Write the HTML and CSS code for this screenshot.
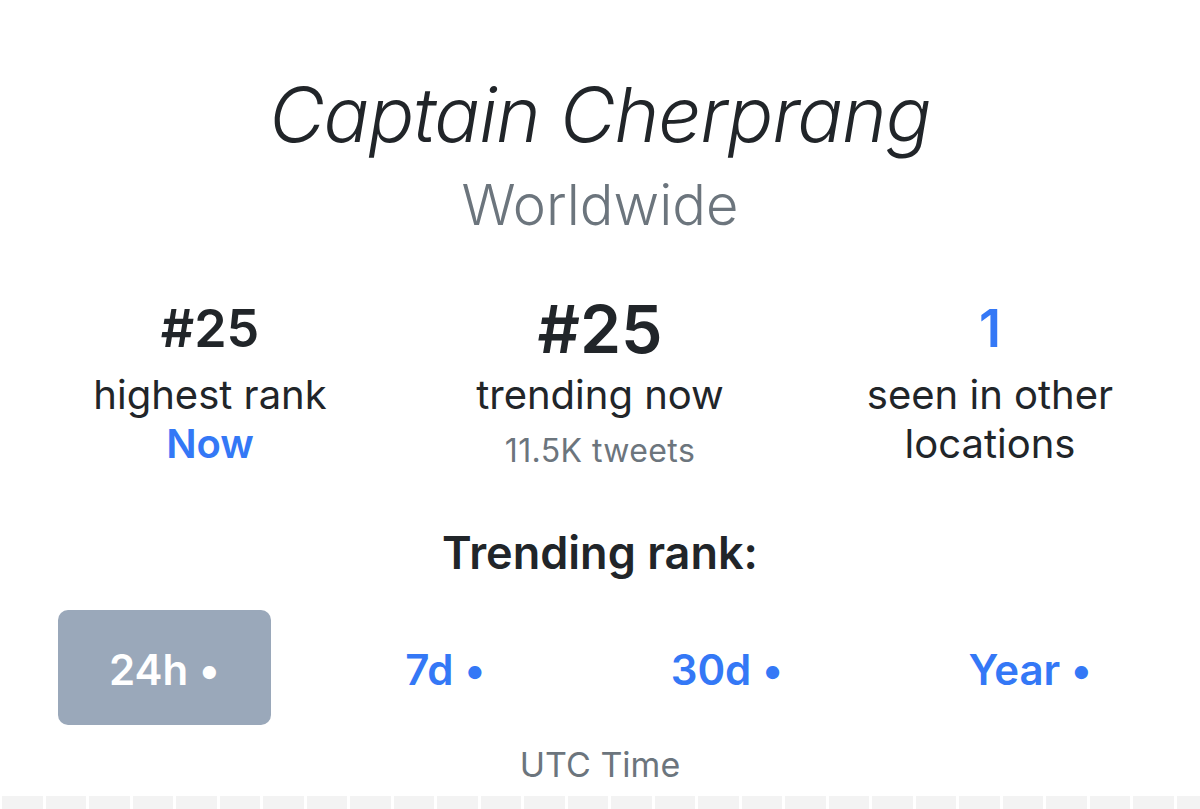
FILE: index.html
```html
<!DOCTYPE html>
<html lang="en">
<head>
  <meta charset="UTF-8" />
  <title>Captain Cherprang - Worldwide</title>
  <link rel="stylesheet" href="styles.css">
</head>
<body>

  <div class="trend-page">
    <h1 class="trend-name">Captain Cherprang</h1>
    <div class="trend-location">Worldwide</div>

    <div class="stats">
      <div class="stat">
        <div class="stat-num">#25</div>
        <div class="stat-label">highest rank</div>
        <div class="stat-label blue strong">Now</div>
      </div>
      <div class="stat">
        <div class="stat-num big">#25</div>
        <div class="stat-label">trending now</div>
        <div class="stat-sub">11.5K tweets</div>
      </div>
      <div class="stat">
        <div class="stat-num blue">1</div>
        <div class="stat-label">seen in other</div>
        <div class="stat-label">locations</div>
      </div>
    </div>

    <h2 class="rank-title">Trending rank:</h2>

    <div class="ranges">
      <div class="range active">24h •</div>
      <div class="range">7d •</div>
      <div class="range">30d •</div>
      <div class="range">Year •</div>
    </div>

    <div class="utc">UTC Time</div>

    <div class="hours" id="hours"></div>
  </div>

  <script>
    // hour cells of the chart
    const hours = document.getElementById('hours');
    for (let i = 0; i < 28; i++) {
      const cell = document.createElement('div');
      cell.className = 'hour';
      hours.appendChild(cell);
    }
  </script>

</body>
</html>
```

FILE: styles.css
```css
body {
  font-family: 'Inter', 'Roboto', sans-serif;
  background-color: #fff;
  color: #212529;
  margin: 0;
  padding: 0;
  overflow: hidden;
}

.trend-page {
  width: 1200px;
  height: 809px;
  text-align: center;
  padding-top: 75px;
  box-sizing: border-box;
}

.trend-name {
  margin: 0;
  font-size: 76px;
  line-height: 78px;
  font-weight: 300;
  font-style: italic;
  letter-spacing: -1px;
}

.trend-location {
  margin-top: 25px;
  font-size: 56px;
  line-height: 55px;
  font-weight: 300;
  color: #6c757d;
}

.stats {
  display: grid;
  grid-template-columns: repeat(3, 1fr);
  padding: 0 15px;
  margin-top: 61px;
}

.stat-num {
  font-size: 52px;
  line-height: 70px;
  font-weight: 600;
}

.stat-num.big {
  font-size: 66px;
}

.stat-label {
  font-size: 40px;
  line-height: 49px;
}

.stat-num + .stat-label {
  margin-top: 6px;
}

.stat-sub {
  font-size: 32px;
  line-height: 49px;
  margin-top: 7px;
  letter-spacing: 0.4px;
  color: #6c757d;
}

.blue {
  color: #3478f6;
}

.strong {
  font-weight: 600;
}

.rank-title {
  margin: 0;
  margin-top: 56px;
  font-size: 45px;
  line-height: 44px;
  font-weight: 600;
}

.ranges {
  display: flex;
  justify-content: space-between;
  padding: 0 57px 0 58px;
  margin-top: 35px;
}

.range {
  height: 115px;
  box-sizing: border-box;
  padding: 6px 51px 0;
  line-height: 107px;
  font-size: 42px;
  font-weight: 600;
  color: #3478f6;
  border-radius: 10px;
}

.range.active {
  background-color: #9aa8ba;
  color: #fff;
}

.utc {
  margin-top: 23px;
  font-size: 34px;
  line-height: 1;
  color: #6c757d;
}

.hours {
  display: flex;
  gap: 3px;
  padding-left: 2px;
  margin-top: 14px;
}

.hour {
  flex: 0 0 40.5px;
  height: 20px;
  background-color: #f3f3f3;
}
```
